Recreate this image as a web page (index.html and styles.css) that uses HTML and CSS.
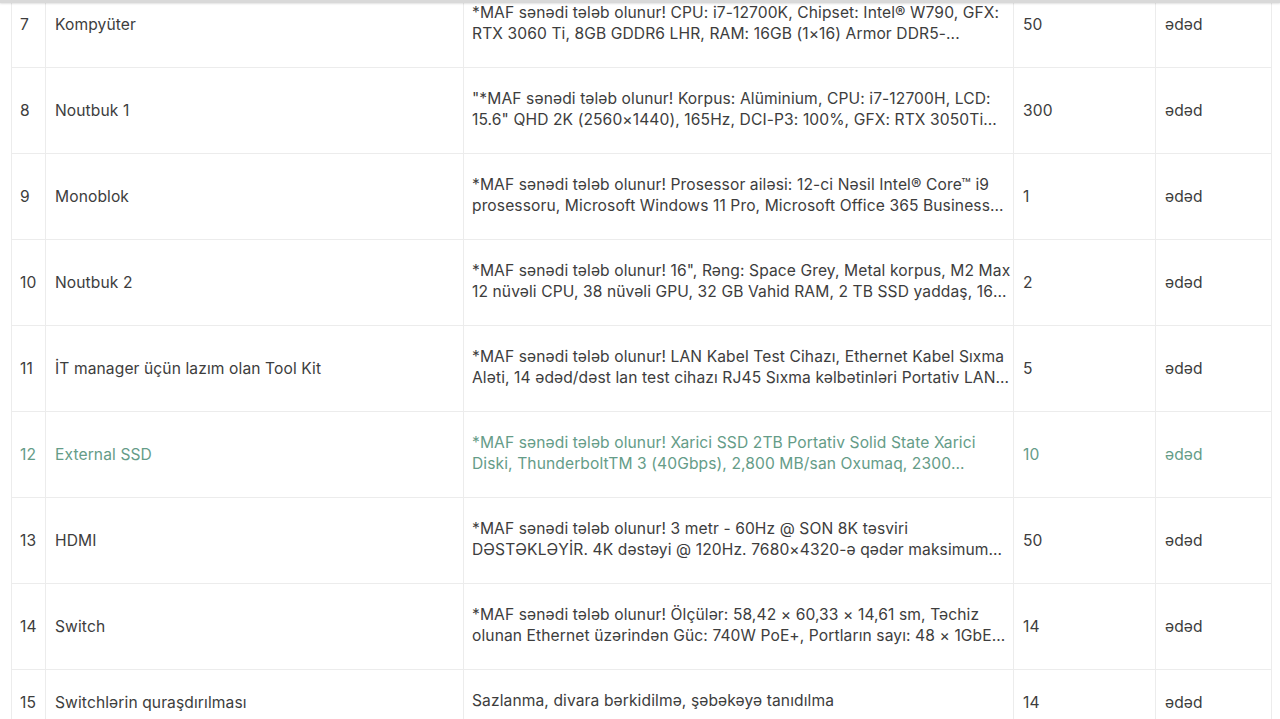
FILE: index.html
```html
<!DOCTYPE html>
<html lang="az">
<head>
<meta charset="utf-8">
<title>Məhsullar</title>
<link rel="stylesheet" href="styles.css">
</head>
<body>
<div class="topbar"></div>
<div class="page">
  <table class="items">
    <colgroup>
      <col class="c-no"><col class="c-name"><col class="c-desc"><col class="c-qty"><col class="c-unit">
    </colgroup>
    <tbody>
      <tr>
        <td class="no">7</td>
        <td class="name">Kompyüter</td>
        <td class="desc"><div class="clamp">*MAF sənədi tələb olunur! CPU: i7-12700K, Chipset: Intel® W790, GFX: RTX 3060 Ti, 8GB GDDR6 LHR, RAM: 16GB (1×16) Armor DDR5-...</div></td>
        <td class="qty">50</td>
        <td class="unit">ədəd</td>
      </tr>
      <tr>
        <td class="no">8</td>
        <td class="name">Noutbuk 1</td>
        <td class="desc"><div class="clamp">"*MAF sənədi tələb olunur! Korpus: Alüminium, CPU: i7-12700H, LCD: 15.6" QHD 2K (2560×1440), 165Hz, DCI-P3: 100%, GFX: RTX 3050Ti Laptop GPU 4GB, RAM: 16GB DDR5</div></td>
        <td class="qty">300</td>
        <td class="unit">ədəd</td>
      </tr>
      <tr>
        <td class="no">9</td>
        <td class="name">Monoblok</td>
        <td class="desc"><div class="clamp">*MAF sənədi tələb olunur! Prosessor ailəsi: 12-ci Nəsil Intel® Core™ i9 prosessoru, Microsoft Windows 11 Pro, Microsoft Office 365 Business Standard, Ekran: 27"</div></td>
        <td class="qty">1</td>
        <td class="unit">ədəd</td>
      </tr>
      <tr>
        <td class="no">10</td>
        <td class="name">Noutbuk 2</td>
        <td class="desc"><div class="clamp">*MAF sənədi tələb olunur! 16", Rəng: Space Grey, Metal korpus, M2 Max 12 nüvəli CPU, 38 nüvəli GPU, 32 GB Vahid RAM, 2 TB SSD yaddaş, 16 nüvəli Neural Engine</div></td>
        <td class="qty">2</td>
        <td class="unit">ədəd</td>
      </tr>
      <tr>
        <td class="no">11</td>
        <td class="name">İT manager üçün lazım olan Tool Kit</td>
        <td class="desc"><div class="clamp">*MAF sənədi tələb olunur! LAN Kabel Test Cihazı, Ethernet Kabel Sıxma Aləti, 14 ədəd/dəst lan test cihazı RJ45 Sıxma kəlbətinləri Portativ LAN Tester dəsti</div></td>
        <td class="qty">5</td>
        <td class="unit">ədəd</td>
      </tr>
      <tr class="active">
        <td class="no">12</td>
        <td class="name">External SSD</td>
        <td class="desc"><div class="clamp">*MAF sənədi tələb olunur! Xarici SSD 2TB Portativ Solid State Xarici Diski, ThunderboltTM 3 (40Gbps), 2,800 MB/san Oxumaq, 2300 MB/san Yazmaq sürəti</div></td>
        <td class="qty">10</td>
        <td class="unit">ədəd</td>
      </tr>
      <tr>
        <td class="no">13</td>
        <td class="name">HDMI</td>
        <td class="desc"><div class="clamp">*MAF sənədi tələb olunur! 3 metr - 60Hz @ SON 8K təsviri DƏSTƏKLƏYİR. 4K dəstəyi @ 120Hz. 7680×4320-ə qədər maksimum təsvir ölçüsü, HDR10, eARC dəstəyi, 48Gbps ötürmə sürəti</div></td>
        <td class="qty">50</td>
        <td class="unit">ədəd</td>
      </tr>
      <tr>
        <td class="no">14</td>
        <td class="name">Switch</td>
        <td class="desc"><div class="clamp">*MAF sənədi tələb olunur! Ölçülər: 58,42 × 60,33 × 14,61 sm, Təchiz olunan Ethernet üzərindən Güc: 740W PoE+, Portların sayı: 48 × 1GbE PoE+ portu</div></td>
        <td class="qty">14</td>
        <td class="unit">ədəd</td>
      </tr>
      <tr>
        <td class="no">15</td>
        <td class="name">Switchlərin quraşdırılması</td>
        <td class="desc"><div class="clamp">Sazlanma, divara bərkidilmə, şəbəkəyə tanıdılma</div></td>
        <td class="qty">14</td>
        <td class="unit">ədəd</td>
      </tr>
    </tbody>
  </table>
</div>
</body>
</html>
```

FILE: styles.css
```css
html, body {
  margin: 0;
  padding: 0;
  background: #ffffff;
  overflow: hidden;
}

body {
  font-family: Inter, "Noto Sans", "DejaVu Sans", sans-serif;
  font-size: 15.6px;
  letter-spacing: 0.1px;
  color: #3d3d3d;
}

.topbar {
  position: fixed;
  top: 0;
  left: 0;
  right: 0;
  height: 3px;
  background: #d9d9d9;
  box-shadow: 0 1px 2px rgba(0, 0, 0, 0.12);
  z-index: 5;
}

.page {
  padding-left: 11px;
  width: 1260px;
}

.items {
  width: 1260px;
  margin-top: -19px;
  border-collapse: collapse;
  table-layout: fixed;
}

.c-no { width: 34px; }
.c-name { width: 418px; }
.c-desc { width: 550px; }
.c-qty { width: 142px; }
.c-unit { width: 116px; }

.items td {
  border: 1px solid #ececec;
  padding: 19px 9px;
  vertical-align: middle;
  line-height: 21px;
}

.items td.no {
  padding-left: 8px;
  padding-right: 4px;
}

.items td.desc {
  padding-left: 8px;
  padding-right: 2px;
}

.clamp {
  display: -webkit-box;
  -webkit-box-orient: vertical;
  -webkit-line-clamp: 2;
  overflow: hidden;
  margin-top: 1px;
  margin-bottom: 4px;
}

.items tr.active td {
  color: #659c88;
}
```
